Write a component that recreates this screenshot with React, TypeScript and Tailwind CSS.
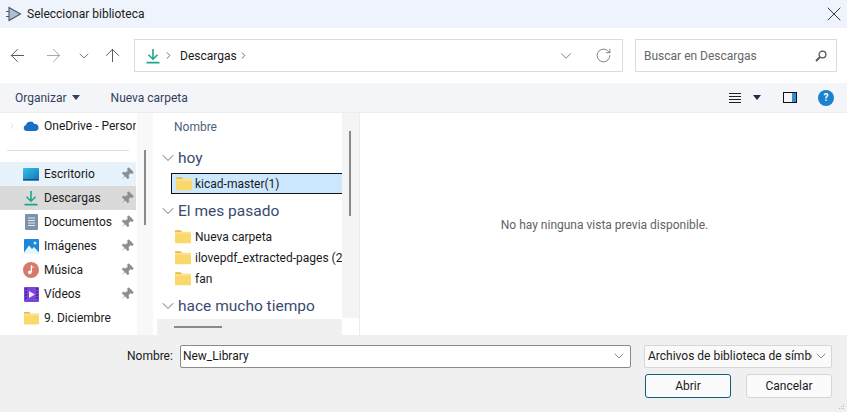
import { ArrowLeft, ArrowRight, ArrowUp, ChevronDown, ChevronRight, RotateCw, X, Pin } from 'lucide-react';

const font = 'font-["Roboto",sans-serif]';

function DownloadIcon({ size = 16 }: { size?: number }) {
  return (
    <svg width={size} height={size} viewBox="0 0 16 16" fill="none" stroke="#1fa58a" strokeWidth="1.6" className="shrink-0">
      <path d="M8 1v10M3.5 6.8 8 11.2l4.5-4.4M1.5 14.6h13" />
    </svg>
  );
}

function FolderIcon({ size = 18 }: { size?: number }) {
  return (
    <svg width={size} height={size * 0.85} viewBox="0 0 18 15" className="shrink-0">
      <path d="M1 2.2C1 1.5 1.5 1 2.2 1h4.2l2 1.8H1z" fill="#e5b441" />
      <rect x="1" y="2.6" width="16" height="11.6" rx="1" fill="#fbd86c" />
      <rect x="1" y="3.4" width="16" height="1" fill="#fdeaa6" />
    </svg>
  );
}

function SideIcon({ name }: { name: string }) {
  if (name === 'Escritorio') {
    return (
      <svg width="16" height="13" viewBox="0 0 16 13" className="shrink-0">
        <defs>
          <linearGradient id="desk" x1="0" x2="1" y1="0" y2="1">
            <stop offset="0" stopColor="#35c3e8" />
            <stop offset="1" stopColor="#1173b8" />
          </linearGradient>
        </defs>
        <rect width="16" height="12.5" rx="1" fill="url(#desk)" />
        <rect y="11" width="16" height="1.5" fill="#17528a" />
      </svg>
    );
  }
  if (name === 'Descargas') return <DownloadIcon />;
  if (name === 'Documentos') {
    return (
      <svg width="13" height="16" viewBox="0 0 13 16" className="shrink-0">
        <rect width="13" height="16" rx="1" fill="#7d92ab" />
        <path d="M3 4h7M3 6.5h7M3 9h7M3 11.5h7" stroke="#e4ebf3" strokeWidth="1" />
      </svg>
    );
  }
  if (name === 'Imágenes') {
    return (
      <svg width="15" height="15" viewBox="0 0 15 15" className="shrink-0">
        <rect width="15" height="15" rx="1" fill="#1e88d8" />
        <path d="M0 13.5 5 6.5l3 3.4 2-1.9 5 5.5V15H0z" fill="#e8f6fd" />
        <circle cx="11" cy="4" r="1.5" fill="#bfe6fa" />
      </svg>
    );
  }
  if (name === 'Música') {
    return (
      <svg width="16" height="16" viewBox="0 0 16 16" className="shrink-0">
        <circle cx="8" cy="8" r="8" fill="#d57a6c" />
        <path d="M8.4 3.5v6.6" stroke="#fff" strokeWidth="1.3" />
        <path d="M8.4 3.5c.6 1.3 1.8 1.4 2.4 2.3" stroke="#fff" strokeWidth="1" fill="none" />
        <circle cx="6.8" cy="10.4" r="1.8" fill="#fff" />
      </svg>
    );
  }
  if (name === 'Vídeos') {
    return (
      <svg width="15" height="15" viewBox="0 0 15 15" className="shrink-0">
        <rect width="15" height="15" rx="1" fill="#7a45d8" />
        <path d="M5 4l6 3.5L5 11z" fill="#efe6ff" />
        <path d="M1 2h2M1 5h2M1 8h2M1 11h2M12 2h2M12 5h2M12 8h2M12 11h2" stroke="#2b1a66" strokeWidth="1.2" />
      </svg>
    );
  }
  return <FolderIcon size={17} />;
}

const sideItems = [
  { name: 'Escritorio', bg: 'bg-[#e8f2fb]' },
  { name: 'Descargas', bg: 'bg-[#dadada]' },
  { name: 'Documentos', bg: '' },
  { name: 'Imágenes', bg: '' },
  { name: 'Música', bg: '' },
  { name: 'Vídeos', bg: '' },
  { name: '9. Diciembre', bg: '', noPin: true },
];

function GroupHeader({ label }: { label: string }) {
  return (
    <div className="flex items-center h-[24px] pl-px">
      <ChevronDown size={20} strokeWidth={1.1} className="text-[#5b6470] shrink-0" />
      <span className="pt-[2px] text-[15.5px] text-[#3a4a70] whitespace-nowrap">{label}</span>
    </div>
  );
}

function FileRow({ label }: { label: string }) {
  return (
    <div className="flex items-center h-[21px] pl-[17px] gap-[3px]">
      <FolderIcon />
      <span className="text-[12px] text-[#1a1a1a] whitespace-nowrap">{label}</span>
    </div>
  );
}

export default function App() {
  return (
    <div className={`${font} w-[847px] h-[412px] flex flex-col overflow-hidden bg-white text-[12px] text-[#1a1a1a]`}>
      <div className="h-[28px] shrink-0 bg-[#eff3fb] flex items-center pl-[5px] pr-px">
        <svg width="18" height="18" viewBox="0 0 18 18" className="mr-[4px] shrink-0">
          <path d="M4 2.5 15.5 9 4 15.5z" fill="#a9c0d6" stroke="#4b5563" strokeWidth="1.1" />
          <path d="M1 6.5h3M1 11.5h3" stroke="#4b5563" strokeWidth="1" />
        </svg>
        <span className="flex-1 text-[12px]">Seleccionar biblioteca</span>
        <X size={24} strokeWidth={0.9} className="text-[#222]" />
      </div>

      <div className="h-[55px] shrink-0 flex items-center pl-[7px] pr-[10px]">
        <ArrowLeft size={21} strokeWidth={1.1} className="text-[#555] shrink-0" />
        <ArrowRight size={21} strokeWidth={1.1} className="text-[#a6a6a6] ml-[15px] shrink-0" />
        <ChevronDown size={16} strokeWidth={1.2} className="text-[#555] ml-[12px] shrink-0" />
        <ArrowUp size={21} strokeWidth={1.1} className="text-[#555] ml-[10px] shrink-0" />
        <div className="ml-[11px] w-[489px] h-[33px] border border-[#dcdcdc] flex items-center pl-[10px] pr-[10px]">
          <DownloadIcon />
          <ChevronRight size={11} strokeWidth={1.8} className="text-[#555] ml-[2px] shrink-0" />
          <span className="ml-[6px] text-[12px]">Descargas</span>
          <ChevronRight size={11} strokeWidth={1.8} className="text-[#555] ml-px shrink-0" />
          <ChevronDown size={18} strokeWidth={1} className="text-[#555] ml-auto shrink-0" />
          <RotateCw size={17} strokeWidth={1.1} className="text-[#666] ml-[20px] shrink-0" />
        </div>
        <div className="ml-[12px] w-[202px] h-[33px] border border-[#dcdcdc] flex items-center justify-between pl-[8px] pr-[9px]">
          <span className="text-[12px] text-[#666]">Buscar en Descargas</span>
          <svg width="12" height="12" viewBox="0 0 12 12" fill="none" stroke="#555" className="shrink-0">
            <circle cx="7.5" cy="4.5" r="3.4" strokeWidth="1.3" />
            <path d="M5 7 1 11" strokeWidth="1.8" />
          </svg>
        </div>
      </div>

      <div className="h-[30px] shrink-0 bg-[#f3f5f8] border-b border-[#ececec] flex items-center pl-[15px] pr-[13px]">
        <span className="text-[#33415c]">Organizar</span>
        <span className="ml-[5px] w-0 h-0 border-x-[4px] border-x-transparent border-t-[5px] border-t-[#33415c]" />
        <span className="ml-[31px] text-[#33415c]">Nueva carpeta</span>
        <div className="ml-auto flex items-center">
          <div className="w-[12px] flex flex-col gap-[2px]">
            <div className="h-px bg-[#222]" />
            <div className="h-px bg-[#222]" />
            <div className="h-px bg-[#222]" />
            <div className="h-px bg-[#222]" />
          </div>
          <span className="ml-[12px] w-0 h-0 border-x-[4px] border-x-transparent border-t-[5px] border-t-[#1f2d4d]" />
          <div className="ml-[22px] w-[14px] h-[11px] border border-[#111] flex justify-end">
            <div className="w-[4px] bg-[#2f8fd0]" />
          </div>
          <div className="ml-[21px] w-[16px] h-[16px] rounded-full bg-[#1b82cf] text-white text-[10px] font-bold flex items-center justify-center">?</div>
        </div>
      </div>

      <div className="flex-1 min-h-0 flex">
        <div className="w-[136px] shrink-0 overflow-hidden">
          <div className="h-[26px] flex items-center pl-[7px]">
            <ChevronRight size={10} strokeWidth={1.4} className="text-[#c8c8c8] shrink-0" />
            <svg width="16" height="10" viewBox="0 0 16 10" className="ml-[6px] shrink-0">
              <path d="M3.5 10a3 3 0 0 1-.6-5.9A4.6 4.6 0 0 1 11.4 3 3.5 3.5 0 0 1 12.5 10z" fill="#1a6fc4" />
            </svg>
            <span className="ml-[5px] whitespace-nowrap text-[12px]">OneDrive - Personal</span>
          </div>
          <div className="mx-[7px] mt-[11px] mb-[11px] h-px bg-[#dcdcdc]" />
          {sideItems.map((item) => (
            <div key={item.name} className={`h-[24px] flex items-center pr-[2px] ${item.bg}`}>
              <div className="w-[44px] shrink-0 flex justify-center pl-[21px] pr-[3px]">
                <SideIcon name={item.name} />
              </div>
              <span className="text-[12px] whitespace-nowrap">{item.name}</span>
              {!item.noPin && <Pin size={14} strokeWidth={1} fill="#8a8f96" className="ml-auto text-[#8a8f96] rotate-45 shrink-0" />}
            </div>
          ))}
        </div>

        <div className="w-[16px] ml-px shrink-0 bg-[#f8f8f8] flex justify-center pt-[37px]">
          <div className="w-[2px] h-[75px] bg-[#8a8a8a]" />
        </div>
        <div className="w-[4px] shrink-0 bg-white" />

        <div className="w-[185px] shrink-0 overflow-hidden flex flex-col">
          <div className="flex-1 min-h-0 overflow-hidden">
            <div className="h-[27px] pl-[17px] flex items-center text-[12px] text-[#4c607a]">Nombre</div>
            <div className="mt-[6px]"><GroupHeader label="hoy" /></div>
            <div className="h-[21px] ml-[14px] border border-[#111] border-r-0 bg-[#cce8ff] flex items-center pl-[3px] gap-[2px] mt-[3px]">
              <FolderIcon />
              <span className="text-[12px] whitespace-nowrap">kicad-master(1)</span>
            </div>
            <div className="mt-[5px]"><GroupHeader label="El mes pasado" /></div>
            <div className="mt-[3px]">
              <FileRow label="Nueva carpeta" />
              <FileRow label="ilovepdf_extracted-pages (2)" />
              <FileRow label="fan" />
            </div>
            <div className="mt-[5px]"><GroupHeader label="hace mucho tiempo" /></div>
          </div>
          <div className="h-[16px] shrink-0 bg-[#f0f0f0] pt-[7px] pl-[17px]">
            <div className="w-[48px] h-[2px] bg-[#8a8a8a]" />
          </div>
        </div>

        <div className="w-[17px] shrink-0 flex flex-col">
          <div className="h-[205px] bg-[#f4f4f4] pt-[18px] pl-[7px]">
            <div className="w-[2px] h-[85px] bg-[#8a8a8a]" />
          </div>
        </div>

        <div className="flex-1 bg-white flex items-center justify-center border-l border-[#ececec]">
          <span className="text-[#5f6368] text-[12px] mt-[2px] ml-[2px]">No hay ninguna vista previa disponible.</span>
        </div>
      </div>

      <div className="h-[77px] shrink-0 bg-[#f0f0f0] flex flex-col pr-[15px] pt-[10px] relative">
        <div className="flex items-center h-[22px]">
          <span className="ml-[127px] w-[53px] text-[12px]">Nombre:</span>
          <div className="w-[452px] h-[23px] bg-white border border-[#8a8a8a] rounded-[2px] flex items-center justify-between pl-[2px] pr-[3px]">
            <span className="text-[12px]">New_Library</span>
            <ChevronDown size={16} strokeWidth={1} className="text-[#555]" />
          </div>
          <div className="ml-[13px] w-[188px] h-[23px] bg-[#fafafa] border border-[#d6d6d6] rounded-[2px] flex items-center pl-[3px] pr-[2px]">
            <span className="flex-1 overflow-hidden whitespace-nowrap text-[12px]">Archivos de biblioteca de símbolos</span>
            <ChevronDown size={16} strokeWidth={1} className="text-[#555] ml-[1px] shrink-0" />
          </div>
        </div>
        <div className="flex justify-end mt-[7px]">
          <div className="w-[86px] h-[24px] bg-[#fbfbfb] border border-[#115f7e] rounded-[3px] flex items-center justify-center text-[12px]">Abrir</div>
          <div className="ml-[15px] w-[86px] h-[24px] bg-[#fbfbfb] border border-[#d6d6d6] rounded-[3px] flex items-center justify-center text-[12px]">Cancelar</div>
        </div>
        <svg width="6" height="6" viewBox="0 0 6 6" fill="#bdbdbd" className="absolute right-[2px] bottom-[2px]">
          <rect x="4" y="0" width="1" height="1" />
          <rect x="2" y="2" width="1" height="1" />
          <rect x="4" y="2" width="1" height="1" />
          <rect x="0" y="4" width="1" height="1" />
          <rect x="2" y="4" width="1" height="1" />
          <rect x="4" y="4" width="1" height="1" />
        </svg>
      </div>
    </div>
  );
}
